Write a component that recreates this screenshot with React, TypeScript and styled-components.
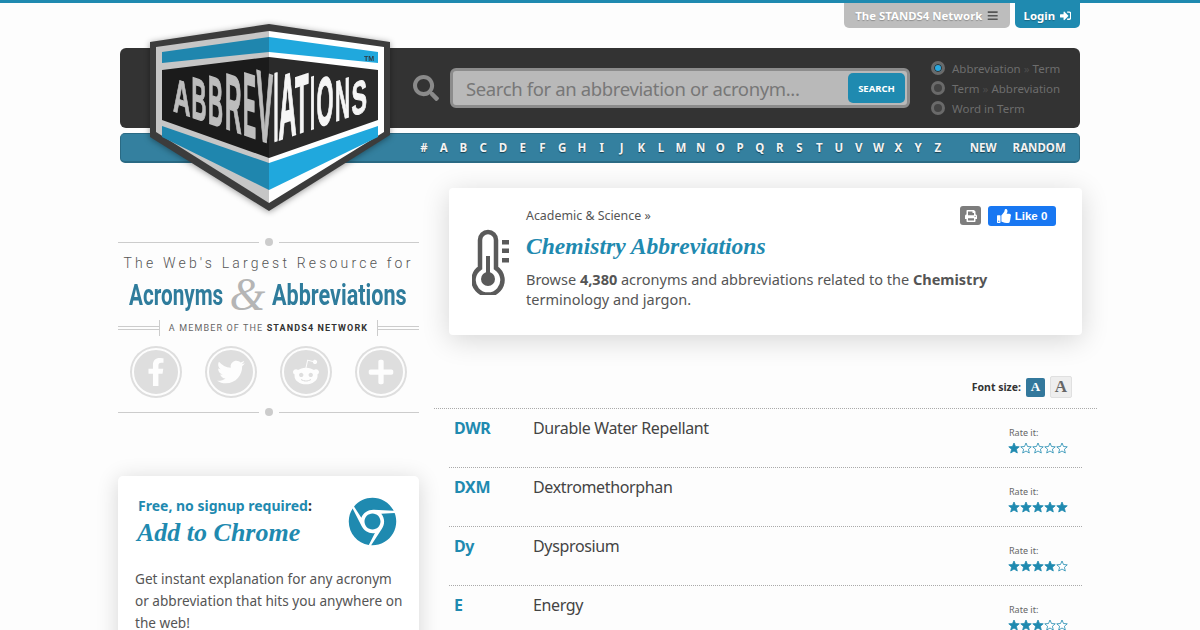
import React from "react";
import styled, { createGlobalStyle } from "styled-components";
import { FaBars, FaChrome, FaFacebookF, FaPlus, FaPrint, FaRedditAlien, FaSearch, FaSignInAlt, FaThumbsUp, FaTwitter } from "react-icons/fa";

const teal = "#1f8ab0";
const sans = `"Noto Sans", "Open Sans", sans-serif`;
const script = `"Liberation Serif", serif`;

const Global = createGlobalStyle`
  html, body { margin: 0; height: 630px; overflow: hidden; background: #fdfdfd; }
  body { border-top: 3px solid ${teal}; box-sizing: border-box; font-family: ${sans}; color: #555; }
  * { box-sizing: border-box; }
`;

const Page = styled.div`
  position: relative;
  width: 960px;
  margin: 0 auto;
`;
const TopTabs = styled.div`
  height: 45px;
  display: flex;
  justify-content: flex-end;
  gap: 5px;
`;
const Tab = styled.div<{ $bg: string; $w: number }>`
  width: ${(p) => p.$w}px;
  height: 25px;
  background: ${(p) => p.$bg};
  border-radius: 0 0 5px 5px;
  display: flex;
  align-items: center;
  justify-content: center;
  gap: 5px;
  color: #fff;
  font-size: 11.4px;
  font-weight: 700;
  white-space: nowrap;
  text-shadow: 0 1px 1px rgba(0, 0, 0, 0.25);
`;
const SearchBar = styled.div`
  height: 80px;
  background: #333;
  border-radius: 6px;
  display: flex;
  align-items: center;
  padding-left: 293px;
`;
const SearchGlyph = styled.div`
  width: 37px;
  display: flex;
  color: #8a8a8a;
  font-size: 26px;
`;
const SearchField = styled.div`
  width: 460px;
  height: 40px;
  background: #b9b9b9;
  border: 3px solid #8c8c8c;
  border-radius: 6px;
  display: flex;
  align-items: center;
  justify-content: space-between;
  padding: 0 2px 0 13px;
`;
const Placeholder = styled.span`
  font-size: 18.5px;
  letter-spacing: -0.37px;
  color: #777;
  white-space: nowrap;
`;
const SearchButton = styled.div`
  width: 57px;
  height: 30px;
  background: ${teal};
  border-radius: 5px;
  color: #fff;
  font-size: 9.5px;
  font-weight: 700;
  display: flex;
  align-items: center;
  justify-content: center;
`;
const Radios = styled.div`
  margin-left: 21px;
  display: flex;
  flex-direction: column;
  gap: 6px;
`;
const RadioRow = styled.div`
  height: 14px;
  display: flex;
  align-items: center;
  gap: 7px;
  font-size: 11.5px;
  color: #6d6d6d;
  white-space: pre;
`;
const Chevrons = styled.span`
  color: #4c4c4c;
`;
const RadioDot = styled.span<{ $on?: boolean }>`
  width: 14px;
  height: 14px;
  border-radius: 50%;
  background: ${(p) => (p.$on ? "#29a9e0" : "#444")};
  border: 3px solid #6a6a6a;
  box-shadow: ${(p) => (p.$on ? "inset 0 0 0 1px #333" : "none")};
`;
const NavBar = styled.nav`
  margin-top: 5px;
  height: 30px;
  background: #34809f;
  border: 1px solid #2a6a84;
  border-bottom-width: 2px;
  border-radius: 5px;
  display: flex;
  align-items: center;
  padding-left: 293px;
  color: #f4f4f4;
  font-size: 11.5px;
  font-weight: 700;
  text-shadow: 0 1px 1px rgba(0, 0, 0, 0.5);
`;
const Letter = styled.span`
  width: 19.77px;
  text-align: center;
  flex: none;
`;
const NavWord = styled.span<{ $ml: number }>`
  margin-left: ${(p) => p.$ml}px;
`;
const LogoSvg = styled.svg`
  position: absolute;
  left: 20px;
  top: 17px;
  filter: drop-shadow(0 1px 3px rgba(0, 0, 0, 0.4));
`;

const Columns = styled.div`
  display: flex;
  gap: 30px;
  margin: 25px 0 0 -2px;
  width: 964px;
`;
const Side = styled.aside`
  width: 301px;
  flex: none;
  padding-top: 50px;
`;
const Main = styled.main`
  width: 633px;
  flex: none;
`;
const Divider = styled.div`
  height: 8px;
  display: flex;
  align-items: center;
  gap: 6px;
`;
const DividerLine = styled.span`
  flex: 1;
  height: 1px;
  background: #ccc;
`;
const DividerDot = styled.span`
  width: 8px;
  height: 8px;
  border-radius: 50%;
  background: #ccc;
`;
const Tagline = styled.div`
  margin-top: 6px;
  font-family: Roboto, sans-serif;
  font-weight: 300;
  font-size: 14px;
  letter-spacing: 3.2px;
  color: #555;
  text-align: center;
  white-space: nowrap;
  height: 22px;
  line-height: 22px;
`;
const Headline = styled.div`
  height: 40px;
  margin-bottom: 6px;
  display: flex;
  align-items: center;
  padding-left: 11px;
  color: #2f7c9c;
  font-family: Roboto, sans-serif;
  font-weight: 700;
  font-size: 30px;
  white-space: nowrap;
`;
const NarrowWord = styled.span<{ $w: number; $s: number }>`
  display: inline-block;
  width: ${(p) => p.$w}px;
  transform: scaleX(${(p) => p.$s});
  transform-origin: left center;
`;
const Amp = styled.span`
  width: 49px;
  text-align: center;
  font-family: "Liberation Serif", serif;
  font-style: italic;
  font-weight: 400;
  font-size: 46px;
  color: #b5b5b5;
`;
const MemberRow = styled.div`
  height: 16px;
  display: flex;
  align-items: center;
  font-family: Roboto, sans-serif;
  font-size: 9px;
  letter-spacing: 1.13px;
  color: #666;
  white-space: nowrap;
`;
const DoubleRule = styled.span`
  flex: 1;
  height: 4px;
  border-top: 1px solid #ccc;
  border-bottom: 1px solid #ccc;
`;
const MemberText = styled.span`
  height: 16px;
  line-height: 16px;
  padding: 0 9px;
  border-left: 1px solid #ccc;
  border-right: 1px solid #ccc;
  b { color: #333; }
`;
const SocialRow = styled.div`
  margin: 10px 0 10px;
  padding-left: 12px;
  display: flex;
  gap: 23px;
`;
const SocialCircle = styled.div`
  width: 48px;
  height: 48px;
  margin: 2px;
  border-radius: 50%;
  background: #dedede;
  border: 2px solid #fdfdfd;
  box-shadow: 0 0 0 2px #dedede;
  display: flex;
  align-items: center;
  justify-content: center;
  color: #fdfdfd;
  font-size: 28px;
`;
const ChromeCard = styled.section`
  margin-top: 60px;
  height: 220px;
  background: #fff;
  border-radius: 5px;
  box-shadow: 0 3px 22px rgba(0, 0, 0, 0.16);
  padding: 21px 14px 0 17px;
`;
const ChromeHead = styled.div`
  display: flex;
  justify-content: space-between;
  padding: 0 8px 0 2px;
`;
const FreeLine = styled.div`
  font-size: 14px;
  font-weight: 700;
  color: #333;
  padding-left: 1px;
  line-height: 17px;
  span { color: ${teal}; }
`;
const ChromeTitle = styled.div`
  margin-top: 4px;
  font-family: ${script};
  font-size: 26px;
  font-weight: 700;
  font-style: italic;
  color: ${teal};
  line-height: 30px;
`;
const ChromeGlyph = styled.div`
  display: flex;
  font-size: 49px;
  color: ${teal};
`;
const ChromeText = styled.p`
  margin: 20px 0 0;
  font-size: 13.6px;
  line-height: 22px;
  color: #555;
`;

const InfoCard = styled.section`
  height: 147px;
  background: #fff;
  border-radius: 4px;
  box-shadow: 0 5px 28px rgba(0, 0, 0, 0.16);
  display: flex;
  align-items: center;
  padding: 0 26px 0 23px;
`;
const ThermoBox = styled.div`
  width: 54px;
  flex: none;
  display: flex;
`;
const InfoBody = styled.div`
  flex: 1;
  align-self: flex-start;
  padding-top: 19px;
`;
const InfoTop = styled.div`
  display: flex;
  justify-content: space-between;
  align-items: flex-start;
  height: 19px;
  font-size: 12.4px;
  line-height: 18px;
`;
const Actions = styled.div`
  display: flex;
  gap: 7px;
  margin-top: -1px;
`;
const PrintBtn = styled.div`
  width: 21px;
  height: 19px;
  background: #7d7d7d;
  border-radius: 3px;
  color: #fff;
  font-size: 12px;
  display: flex;
  align-items: center;
  justify-content: center;
`;
const LikeBtn = styled.div`
  width: 68px;
  height: 20px;
  background: #1877f2;
  border-radius: 3px;
  color: #fff;
  font-family: "Liberation Sans", sans-serif;
  font-weight: 700;
  font-size: 11.5px;
  display: flex;
  align-items: center;
  justify-content: center;
  gap: 4px;
  svg { font-size: 14px; }
`;
const InfoTitle = styled.h1`
  margin: 4px 0 0;
  font-family: ${script};
  font-size: 23.6px;
  font-weight: 700;
  font-style: italic;
  color: ${teal};
  line-height: 32px;
`;
const InfoText = styled.p`
  margin: 7px 0 0;
  max-width: 480px;
  font-size: 14.5px;
  line-height: 20px;
  color: #555;
`;
const FontRow = styled.div`
  margin: 41px -15px 0;
  height: 33px;
  padding: 0 25px 10px 0;
  display: flex;
  justify-content: flex-end;
  align-items: center;
  gap: 5px;
  border-bottom: 1px dotted #aaa;
  font-size: 10.5px;
  font-weight: 700;
  color: #333;
`;
const SizeBtn = styled.div<{ $on?: boolean }>`
  width: ${(p) => (p.$on ? 19 : 22)}px;
  height: ${(p) => (p.$on ? 19 : 22)}px;
  border-radius: 2px;
  display: flex;
  align-items: center;
  justify-content: center;
  font-family: "Liberation Serif", serif;
  font-size: ${(p) => (p.$on ? 13 : 17)}px;
  background: ${(p) => (p.$on ? "#33789c" : "#eee")};
  color: ${(p) => (p.$on ? "#fff" : "#666")};
  border: ${(p) => (p.$on ? "none" : "1px solid #e0e0e0")};
`;
const Row = styled.div`
  height: 59px;
  display: grid;
  grid-template-columns: 79px 476px 1fr;
  padding: 7px 0 0 5px;
  border-bottom: 1px dotted #aaa;
`;
const Term = styled.div`
  font-size: 16px;
  letter-spacing: -0.35px;
  font-weight: 700;
  color: ${teal};
  line-height: 24px;
`;
const Definition = styled.div`
  font-size: 16px;
  letter-spacing: -0.35px;
  color: #444;
  line-height: 24px;
`;
const RateBox = styled.div`
  padding-top: 10px;
  font-size: 9px;
  line-height: 13px;
  color: #666;
`;
const Stars = styled.div`
  display: flex;
  margin-top: 3px;
  margin-left: -1px;
`;

const Star = ({ on }: { on: boolean }) => (
  <svg width="12" height="12" viewBox="0 0 24 24">
    <polygon
      points="12,2 15,9 22.5,9.6 16.8,14.5 18.6,22 12,18 5.4,22 7.2,14.5 1.5,9.6 9,9"
      fill={on ? teal : "#fff"}
      stroke={teal}
      strokeWidth="1.6"
      strokeLinejoin="round"
    />
  </svg>
);

const logoLetters: [string, number, number][] = [
  ["A", 173, 17.5], ["B", 191.5, 15], ["B", 208, 15], ["R", 225, 16.5], ["E", 243, 13], ["V", 256.5, 16.5],
  ["I", 273.5, 5], ["A", 278.5, 18], ["T", 295, 13.5], ["I", 310, 5], ["O", 316.5, 17], ["N", 335, 15], ["S", 351.5, 15.5],
];

const LogoText = () => (
  <g fontFamily='"Liberation Sans", sans-serif' fontWeight="700" fontSize="40">
    {logoLetters.map(([ch, x, w], i) => {
      const mid = x + w / 2;
      const t = mid < 269 ? (mid - 173) / 96 : (367 - mid) / 98;
      const top = 82 - 9 * t;
      const bottom = 111 + 32 * t;
      const slope = mid < 269 ? 32 / 96 : -(33 / 98);
      const sy = (bottom - top) / 27.5;
      const yAtX = bottom - slope * (w / 2);
      const fill = x < 270 ? "#bdbdbd" : "#f5f5f5";
      return (
        <text
          key={i}
          transform={`matrix(1 ${slope} 0 ${sy} ${x} ${yAtX})`}
          textLength={w}
          lengthAdjust="spacingAndGlyphs"
          fill={fill}
          stroke={fill}
          strokeWidth="0.9"
        >
          {ch}
        </text>
      );
    })}
  </g>
);

const Logo = () => (
  <LogoSvg width="260" height="200" viewBox="140 20 260 200">
    <polygon points="269,24 390,42 390,135 269,211 150,137 150,42" fill="#3c3c3c" />
    <polygon points="156,47 269,31 269,203 156,132" fill="#c6c6c6" />
    <polygon points="269,31 384,47 384,132 269,203" fill="#fff" />
    <polygon points="162,52 269,37 269,52 162,63" fill="#1f86ae" />
    <polygon points="269,37 378,52 378,63 269,52" fill="#20a8dd" />
    <polygon points="162,126 269,163 269,190 162,137" fill="#1f86ae" />
    <polygon points="269,163 378,126 378,137 269,190" fill="#20a8dd" />
    <polygon points="162,70 269,57 269,158 162,120" fill="#1b1b1b" />
    <polygon points="269,57 378,70 378,120 269,158" fill="#2a2a2a" />
    <LogoText />
    <text x="364" y="60.5" fontSize="7" fontWeight="700" fontFamily='"Liberation Sans", sans-serif' fill="#2f3a40">TM</text>
  </LogoSvg>
);

const Thermometer = () => (
  <svg width="38" height="66" viewBox="0 0 38 66">
    <path d="M8 39V11a8 8 0 0 1 16 0v28a14.5 14.5 0 1 1-16 0Z" fill="none" stroke="#5a5a5a" strokeWidth="4.5" />
    <rect x="14" y="27" width="4" height="20" fill="#5a5a5a" />
    <circle cx="16" cy="50" r="7" fill="#5a5a5a" />
    <rect x="30" y="11" width="7" height="4.5" fill="#5a5a5a" />
    <rect x="30" y="19.5" width="7" height="4.5" fill="#5a5a5a" />
    <rect x="30" y="29" width="7" height="4.5" fill="#5a5a5a" />
  </svg>
);

const rows: [string, string, number][] = [
  ["DWR", "Durable Water Repellant", 1],
  ["DXM", "Dextromethorphan", 5],
  ["Dy", "Dysprosium", 4],
  ["E", "Energy", 3],
];

const letters = "# A B C D E F G H I J K L M N O P Q R S T U V W X Y Z".split(" ");

export default function App() {
  return (
    <Page>
      <Global />
      <TopTabs>
        <Tab $bg="#bdbdbd" $w={166}>The STANDS4 Network <FaBars color="#555" /></Tab>
        <Tab $bg={teal} $w={65}>Login <FaSignInAlt /></Tab>
      </TopTabs>
      <SearchBar>
        <SearchGlyph><FaSearch /></SearchGlyph>
        <SearchField>
          <Placeholder>Search for an abbreviation or acronym...</Placeholder>
          <SearchButton>SEARCH</SearchButton>
        </SearchField>
        <Radios>
          <RadioRow><RadioDot $on /><span>Abbreviation <Chevrons>»</Chevrons> Term</span></RadioRow>
          <RadioRow><RadioDot /><span>Term <Chevrons>»</Chevrons> Abbreviation</span></RadioRow>
          <RadioRow><RadioDot /><span>Word in Term</span></RadioRow>
        </Radios>
      </SearchBar>
      <NavBar>
        {letters.map((l) => <Letter key={l}>{l}</Letter>)}
        <NavWord $ml={22}>NEW</NavWord>
        <NavWord $ml={16}>RANDOM</NavWord>
      </NavBar>
      <Logo />
      <Columns>
        <Side>
          <Divider><DividerLine /><DividerDot /><DividerLine /></Divider>
          <Tagline>The Web's Largest Resource for</Tagline>
          <Headline>
            <NarrowWord $w={94} $s={0.69}>Acronyms</NarrowWord>
            <Amp>&amp;</Amp>
            <NarrowWord $w={135} $s={0.72}>Abbreviations</NarrowWord>
          </Headline>
          <MemberRow>
            <DoubleRule />
            <MemberText>A MEMBER OF THE <b>STANDS4 NETWORK</b></MemberText>
            <DoubleRule />
          </MemberRow>
          <SocialRow>
            <SocialCircle><FaFacebookF /></SocialCircle>
            <SocialCircle><FaTwitter /></SocialCircle>
            <SocialCircle><FaRedditAlien /></SocialCircle>
            <SocialCircle><FaPlus /></SocialCircle>
          </SocialRow>
          <Divider><DividerLine /><DividerDot /><DividerLine /></Divider>
          <ChromeCard>
            <ChromeHead>
              <div>
                <FreeLine><span>Free, no signup required</span>:</FreeLine>
                <ChromeTitle>Add to Chrome</ChromeTitle>
              </div>
              <ChromeGlyph><FaChrome /></ChromeGlyph>
            </ChromeHead>
            <ChromeText>Get instant explanation for any acronym or abbreviation that hits you anywhere on the web!</ChromeText>
          </ChromeCard>
        </Side>
        <Main>
          <InfoCard>
            <ThermoBox><Thermometer /></ThermoBox>
            <InfoBody>
              <InfoTop>
                <span>Academic &amp; Science »</span>
                <Actions>
                  <PrintBtn><FaPrint /></PrintBtn>
                  <LikeBtn><FaThumbsUp /> Like 0</LikeBtn>
                </Actions>
              </InfoTop>
              <InfoTitle>Chemistry Abbreviations</InfoTitle>
              <InfoText>Browse <b>4,380</b> acronyms and abbreviations related to the <b>Chemistry</b> terminology and jargon.</InfoText>
            </InfoBody>
          </InfoCard>
          <FontRow>
            Font size:
            <SizeBtn $on>A</SizeBtn>
            <SizeBtn>A</SizeBtn>
          </FontRow>
          {rows.map(([t, d, n]) => (
            <Row key={t}>
              <Term>{t}</Term>
              <Definition>{d}</Definition>
              <RateBox>
                Rate it:
                <Stars>{[1, 2, 3, 4, 5].map((i) => <Star key={i} on={i <= n} />)}</Stars>
              </RateBox>
            </Row>
          ))}
        </Main>
      </Columns>
    </Page>
  );
}
